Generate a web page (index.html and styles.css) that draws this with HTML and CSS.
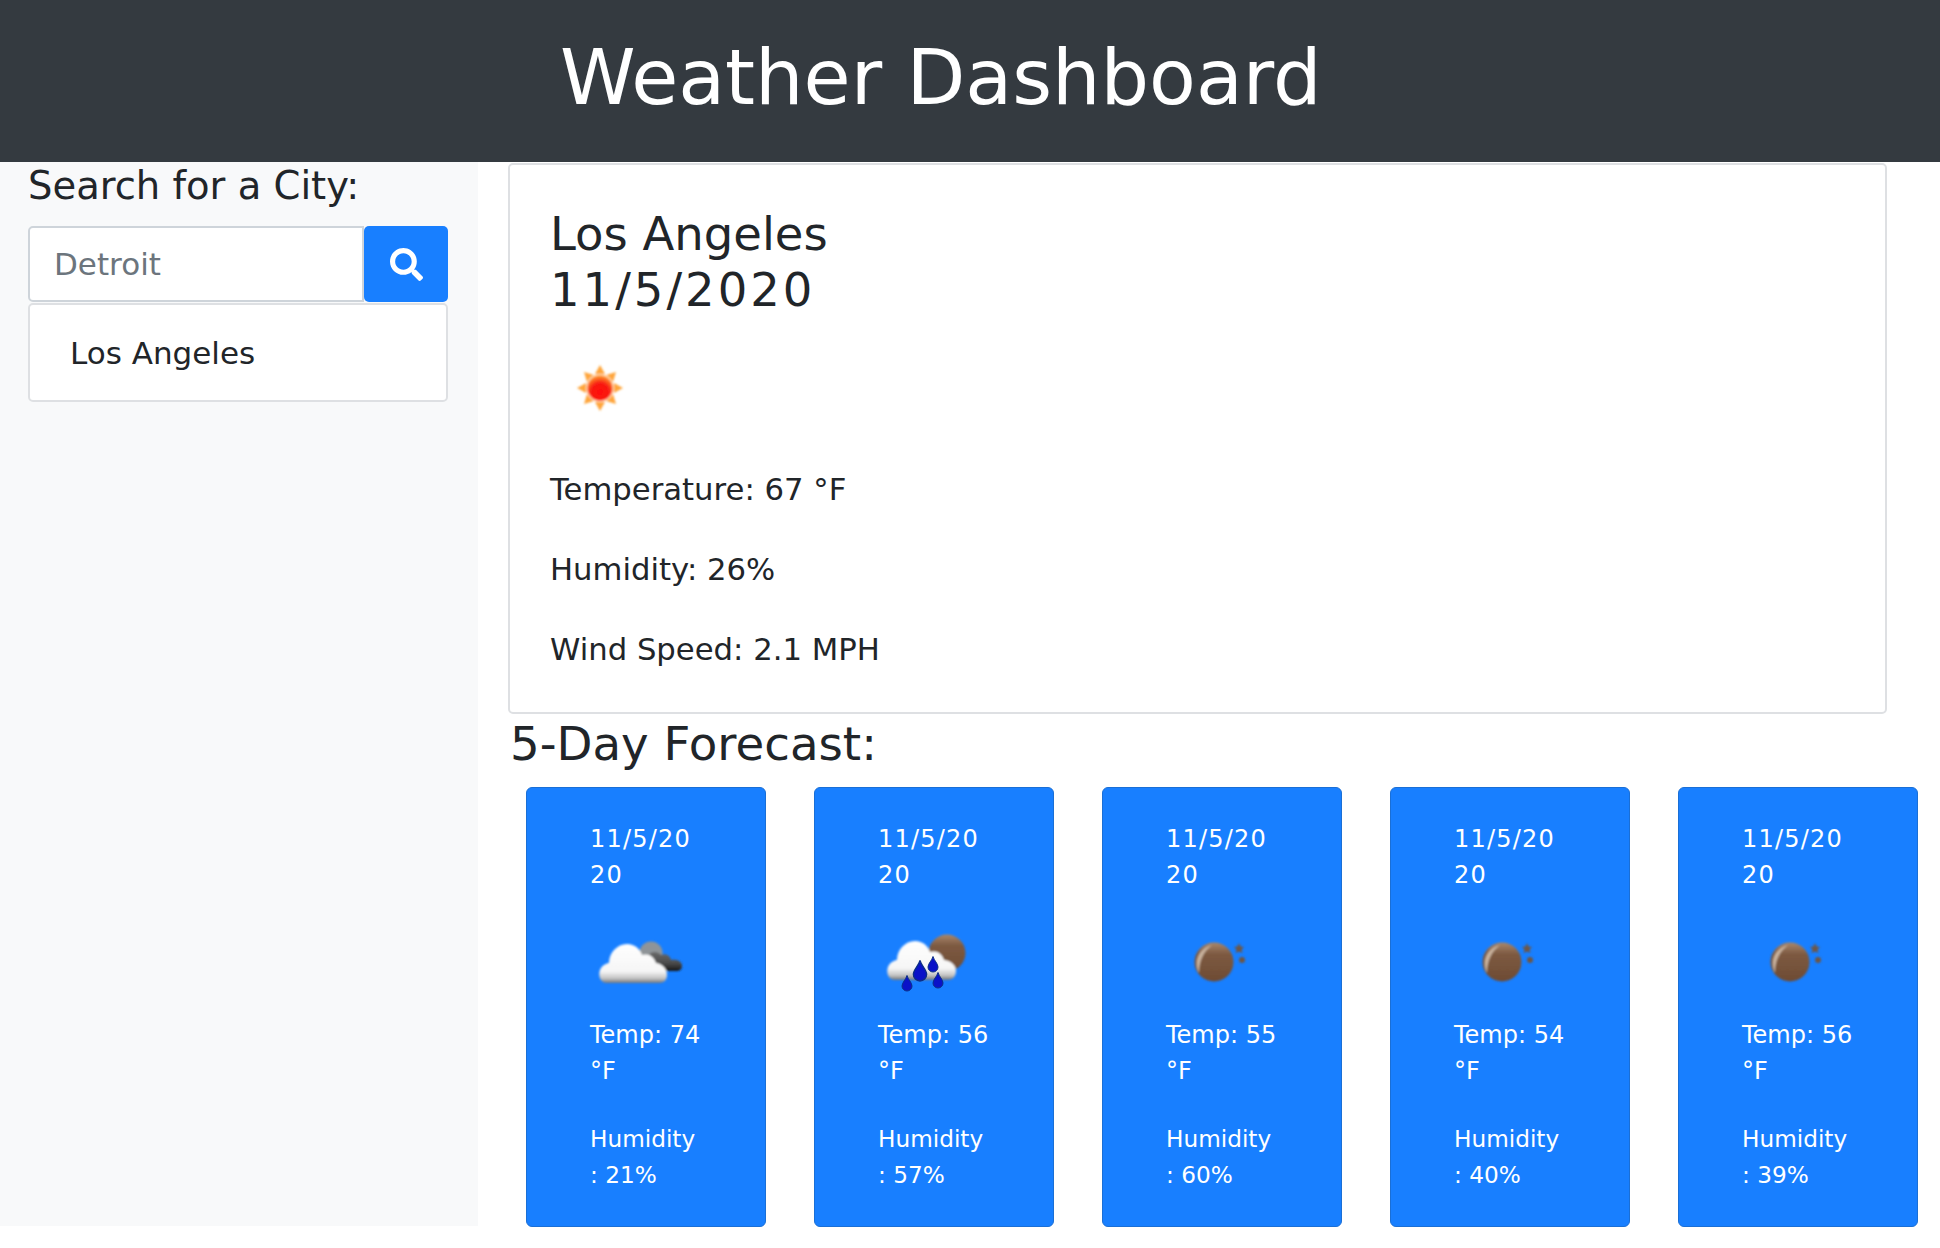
FILE: index.html
```html
<!DOCTYPE html>
<html lang="en">
<head>
    <meta charset="UTF-8">
    <title>Weather Dashboard</title>
    <link rel="stylesheet" href="styles.css">
</head>
<body>
    <svg class="defs" width="0" height="0" aria-hidden="true">
        <defs>
            <radialGradient id="sunCore" cx="50%" cy="65%" r="60%">
                <stop offset="0" stop-color="#ff0d0d"/>
                <stop offset="0.55" stop-color="#f81a12"/>
                <stop offset="1" stop-color="#ff9a2e"/>
            </radialGradient>
            <linearGradient id="cloudWhite" x1="0" y1="0" x2="0" y2="1">
                <stop offset="0" stop-color="#ffffff"/>
                <stop offset="0.7" stop-color="#f6f6f6"/>
                <stop offset="0.88" stop-color="#c4c4c4"/>
                <stop offset="1" stop-color="#6f7478"/>
            </linearGradient>
            <linearGradient id="cloudDark" x1="0" y1="0" x2="0" y2="1">
                <stop offset="0" stop-color="#6a6a6a"/>
                <stop offset="0.6" stop-color="#4a4a4a"/>
                <stop offset="1" stop-color="#141414"/>
            </linearGradient>
            <linearGradient id="moonFill" x1="0" y1="0" x2="0" y2="1">
                <stop offset="0" stop-color="#a8876c"/>
                <stop offset="0.3" stop-color="#7d5a42"/>
                <stop offset="1" stop-color="#6e4b33"/>
            </linearGradient>
            <filter id="soft" x="-10%" y="-10%" width="120%" height="120%">
                <feGaussianBlur stdDeviation="0.8"/>
            </filter>
            <symbol id="drop" viewBox="0 0 12 16">
                <path d="M6 0C7 4 11 7 11 10.500A5 5 0 0 1 1 10.500C1 7 5 4 6 0Z" fill="#0a12c8" stroke="#0b2f86" stroke-width="1"/>
            </symbol>
        </defs>
    </svg>

    <header class="topbar">
        <h1>Weather Dashboard</h1>
    </header>

    <div class="layout">
        <aside class="sidebar">
            <h4>Search for a City:</h4>
            <form class="search">
                <input type="text" placeholder="Detroit">
                <button type="button" aria-label="Search">
                    <svg width="33" height="33" viewBox="0 0 512 512">
                        <path fill="#fff" d="M505 442.700L405.300 343c-4.500-4.500-10.600-7-17-7H372c27.600-35.300 44-79.700 44-128C416 93.100 322.900 0 208 0S0 93.100 0 208s93.100 208 208 208c48.300 0 92.700-16.400 128-44v16.300c0 6.400 2.500 12.500 7 17l99.700 99.700c9.400 9.400 24.600 9.400 33.900 0l28.300-28.300c9.400-9.400 9.400-24.600.1-34zM208 336c-70.700 0-128-57.200-128-128 0-70.700 57.200-128 128-128 70.700 0 128 57.200 128 128 0 70.700-57.200 128-128 128z"/>
                    </svg>
                </button>
            </form>
            <ul class="history">
                <li>Los Angeles</li>
            </ul>
        </aside>

        <main class="content">
            <section class="today">
                <h3>Los Angeles<br><span class="date">11/5/2020</span></h3>
                <svg class="icon" viewBox="0 0 100 100">
                    <g filter="url(#soft)">
                        <g fill="#ffa53a">
                            <path d="M50 27l5 9h-10z"/>
                            <path d="M50 73l5-9h-10z"/>
                            <path d="M27 50l9-5v10z"/>
                            <path d="M73 50l-9-5v10z"/>
                            <path d="M34 34l10 3-7 7z"/>
                            <path d="M66 34l-10 3 7 7z"/>
                            <path d="M34 66l10-3-7-7z"/>
                            <path d="M66 66l-10-3 7-7z"/>
                        </g>
                        <circle cx="50" cy="50" r="13.500" fill="url(#sunCore)" stroke="#ffd9b0" stroke-width="1.500"/>
                    </g>
                </svg>
                <p>Temperature: 67 °F</p>
                <p>Humidity: 26%</p>
                <p>Wind Speed: 2.1 MPH</p>
            </section>

            <h3 class="forecast-title">5-Day Forecast:</h3>

            <div class="forecast">
                <article class="day">
                    <p class="date">11/5/20<br>20</p>
                    <svg class="icon" viewBox="0 0 100 100">
                        <g filter="url(#soft)">
                            <circle cx="61" cy="43" r="11.500" fill="#8f9498"/>
                            <path d="M50 58c-2-8 3-14 9-13 2-4 9-4 12 0 4-2 9 0 10 5 7-1 11 2 11 6 0 3-2 5-6 5H58z" fill="url(#cloudDark)"/>
                            <path d="M17 73C10 73 8 65 10 60c2-5 7-7 9-7 0-10 8-19 18-19 8 0 13 5 15 11 6-2 12 1 14 8 7 1 11 6 11 12 0 5-3 8-8 8z" fill="url(#cloudWhite)"/>
                        </g>
                    </svg>
                    <p>Temp: 74<br>°F</p>
                    <p class="humidity">Humidity<br>: 21%</p>
                </article>
                <article class="day">
                    <p class="date">11/5/20<br>20</p>
                    <svg class="icon" viewBox="0 0 100 100">
                        <g filter="url(#soft)">
                            <circle cx="69" cy="43" r="18.500" fill="url(#moonFill)"/>
                            <path d="M17 70C10 70 8 62 10 57c2-5 7-7 9-7 0-10 8-19 18-19 8 0 13 5 15 11 6-2 12 1 14 8 7 1 12 5 12 11 0 5-3 9-8 9z" fill="url(#cloudWhite)"/>
                        </g>
                        <use href="#drop" x="34" y="50" width="16" height="22"/>
                        <use href="#drop" x="49" y="46" width="12" height="17"/>
                        <use href="#drop" x="54" y="62" width="12" height="17"/>
                        <use href="#drop" x="23" y="65" width="12" height="17"/>
                    </svg>
                    <p>Temp: 56<br>°F</p>
                    <p class="humidity">Humidity<br>: 57%</p>
                </article>
                <article class="day">
                    <p class="date">11/5/20<br>20</p>
                    <svg class="icon"><use href="#moon"/></svg>
                    <p>Temp: 55<br>°F</p>
                    <p class="humidity">Humidity<br>: 60%</p>
                </article>
                <article class="day">
                    <p class="date">11/5/20<br>20</p>
                    <svg class="icon"><use href="#moon"/></svg>
                    <p>Temp: 54<br>°F</p>
                    <p class="humidity">Humidity<br>: 40%</p>
                </article>
                <article class="day">
                    <p class="date">11/5/20<br>20</p>
                    <svg class="icon"><use href="#moon"/></svg>
                    <p>Temp: 56<br>°F</p>
                    <p class="humidity">Humidity<br>: 39%</p>
                </article>
            </div>
        </main>
    </div>

    <svg class="defs" width="0" height="0" aria-hidden="true">
        <symbol id="moon" viewBox="0 0 100 100">
            <g filter="url(#soft)">
                <circle cx="48" cy="52" r="19.500" fill="url(#moonFill)"/>
                <path d="M33 63C27 50 34 38 46 35 38 41 33 50 33 63Z" fill="#c9b29e"/>
                <path d="M73 33l1.500 3.500 3.500.5-2.500 2.500 1 3.500-3.500-1.500-3.500 1.500 1-3.500-2.500-2.500 3.500-.5z" fill="#6e5644"/>
                <circle cx="76" cy="50" r="3" fill="#6e5644"/>
            </g>
        </symbol>
    </svg>
</body>
</html>
```

FILE: styles.css
```css
body {
    margin: 0;
    font-family: "DejaVu Sans", sans-serif;
    color: #212529;
    background-color: #fff;
}
.defs {
    position: absolute;
}
.topbar {
    background-color: #343a40;
    height: 162px;
    box-sizing: border-box;
    padding: 0 0 8px 560px;
    display: flex;
    align-items: center;
}
.topbar h1 {
    margin: 0;
    color: #fff;
    font-size: 76.500px;
    font-weight: 400;
}
.layout {
    display: grid;
    grid-template-columns: 478px 1fr;
}
.sidebar {
    background-color: #f8f9fa;
    height: 1064px;
    padding: 0 30px 0 28px;
    box-sizing: border-box;
}
.sidebar h4 {
    margin: 0 0 16px;
    font-size: 38.500px;
    line-height: 48px;
    font-weight: 400;
}
.search {
    display: flex;
    height: 76px;
}
.search input {
    flex: 1;
    min-width: 0;
    box-sizing: border-box;
    padding: 0 24px;
    border: 2px solid #ced4da;
    border-radius: 5px 0 0 5px;
    font-family: inherit;
    font-size: 31px;
    color: #495057;
}
.search input::placeholder {
    color: #6c757d;
    opacity: 1;
}
.search button {
    width: 84px;
    border: none;
    border-radius: 5px;
    background-color: #187fff;
    display: flex;
    justify-content: center;
    align-items: center;
    padding: 0;
}
.history {
    list-style: none;
    margin: 1px 0 0;
    padding: 0;
}
.history li {
    height: 99px;
    box-sizing: border-box;
    padding: 0 40px;
    display: flex;
    align-items: center;
    background-color: #fff;
    border: 2px solid #dee0e3;
    border-radius: 5px;
    font-size: 31px;
}
.content {
    min-width: 0;
    padding: 1px 53px 0 30px;
}
.today {
    height: 551px;
    box-sizing: border-box;
    padding: 41px 40px 0;
    border: 2px solid #dee0e3;
    border-radius: 5px;
}
.today h3 {
    margin: 0;
    font-size: 46.500px;
    line-height: 56px;
    font-weight: 400;
}
.today .date {
    letter-spacing: 3px;
}
.today .icon {
    display: block;
    width: 100px;
    height: 100px;
    margin: 20px 0 0;
}
.today p {
    margin: 0 0 44px;
    font-size: 30.700px;
    line-height: 36px;
}
.today .icon + p {
    margin-top: 34px;
}
.forecast-title {
    margin: 0 0 13px 2px;
    font-size: 46.700px;
    line-height: 60px;
    font-weight: 400;
}
.forecast {
    display: flex;
    gap: 48px;
    margin-left: 18px;
}
.day {
    flex: none;
    width: 240px;
    height: 440px;
    box-sizing: border-box;
    padding: 33px 40px 0 63px;
    background-color: #187fff;
    border: 1px solid #1a6fd6;
    border-radius: 6px;
    color: #fff;
    font-size: 24px;
    line-height: 36px;
}
.day p {
    margin: 0;
    white-space: nowrap;
}
.day .date {
    letter-spacing: 1.200px;
}
.day .humidity {
    font-size: 23.200px;
}
.day .icon {
    display: block;
    width: 100px;
    height: 100px;
    margin: 17px 0 7px;
}
.day .icon + p {
    margin-bottom: 32px;
}
```
